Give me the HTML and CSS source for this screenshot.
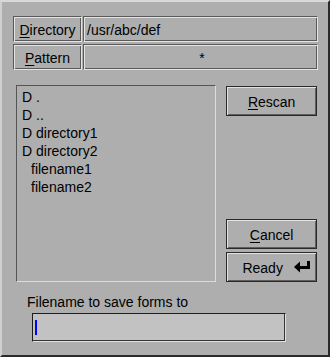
FILE: index.html
```html
<!DOCTYPE html>
<html>
<head>
<meta charset="utf-8">
<link rel="stylesheet" href="styles.css">
</head>
<body>
<div class="window">
  <div class="fields">
    <div class="groove label"><u>D</u>irectory</div>
    <div class="groove value">/usr/abc/def</div>
    <div class="groove label"><u>P</u>attern</div>
    <div class="groove value center">*</div>
  </div>
  <div class="main">
    <div class="list">
      <div class="item">D .</div>
      <div class="item">D ..</div>
      <div class="item">D directory1</div>
      <div class="item">D directory2</div>
      <div class="item file">filename1</div>
      <div class="item file">filename2</div>
    </div>
    <div class="buttons">
      <div class="btn rescan"><u>R</u>escan</div>
      <div class="btn-group">
        <div class="btn"><u>C</u>ancel</div>
        <div class="btn ready">Ready
          <svg class="enter" width="17" height="12" viewBox="0 0 17 12">
            <polygon points="0,6 6,0.5 6,11.5" fill="#000"/>
            <rect x="5" y="5" width="11" height="3" fill="#000"/>
            <rect x="13" y="0" width="3" height="8" fill="#000"/>
          </svg>
        </div>
      </div>
    </div>
  </div>
  <div class="save-label">Filename to save forms to</div>
  <div class="input"><span class="caret"></span></div>
</div>
</body>
</html>
```
FILE: styles.css
```css
html, body {
  margin: 0;
  padding: 0;
  background: #aeaeae;
}
.window {
  box-sizing: border-box;
  width: 330px;
  height: 357px;
  background: #aeaeae;
  border-top: 2px solid #d8d8d8;
  border-left: 2px solid #d0d0d0;
  border-right: 2px solid #2a2a2a;
  border-bottom: 2px solid #2a2a2a;
  padding: 14px 11px 0 11px;
  font-family: "Liberation Sans", Arial, sans-serif;
  font-size: 14px;
  color: #000;
}
.fields {
  display: grid;
  grid-template-columns: 69px 235px;
  grid-auto-rows: 26px;
  column-gap: 1px;
  row-gap: 2px;
}
.groove {
  box-sizing: border-box;
  border: 1px solid;
  border-color: #5a5a5a #e4e4e4 #e4e4e4 #5a5a5a;
  box-shadow: inset 1px 1px 0 #e4e4e4, inset -1px -1px 0 #5a5a5a;
  display: flex;
  align-items: center;
  padding-top: 1px;
  white-space: nowrap;
}
.label {
  justify-content: center;
}
.value {
  padding-left: 3px;
}
.value.center {
  justify-content: center;
}
u {
  text-decoration: underline;
  text-underline-offset: 2px;
}
.main {
  display: flex;
  margin-top: 15px;
  margin-left: 3px;
}
.list {
  box-sizing: border-box;
  width: 201px;
  height: 197px;
  border: 1px solid;
  border-color: #555 #dcdcdc #dcdcdc #555;
  padding: 2px 0 0 5px;
}
.item {
  line-height: 18px;
  white-space: nowrap;
}
.item.file {
  padding-left: 9px;
}
.buttons {
  display: flex;
  flex-direction: column;
  justify-content: space-between;
  width: 91px;
  margin-left: 10px;
}
.btn-group {
  display: flex;
  flex-direction: column;
  gap: 3px;
}
.btn {
  box-sizing: border-box;
  height: 30px;
  border: 1px solid #2a2a2a;
  box-shadow: inset 1px 1px 0 #e2e2e2, inset -1px -1px 0 #5e5e5e;
  display: flex;
  align-items: center;
  justify-content: center;
  padding-top: 2px;
}
.rescan {
  margin-top: 1px;
}
.ready {
  padding-left: 10px;
  gap: 11px;
}
.enter {
  display: block;
  margin-top: -2px;
}
.save-label {
  margin-top: 12px;
  margin-left: 14px;
  line-height: 16px;
}
.input {
  box-sizing: border-box;
  width: 254px;
  height: 29px;
  margin-top: 3px;
  margin-left: 19px;
  background: #c2c2c2;
  border: 1px solid;
  border-color: #1e1e1e #e0e0e0 #e0e0e0 #1e1e1e;
  box-shadow: inset -1px -1px 0 #333;
  display: flex;
  align-items: center;
  padding-left: 2px;
}
.caret {
  display: block;
  width: 2px;
  height: 15px;
  background: #0000ff;
}
```
